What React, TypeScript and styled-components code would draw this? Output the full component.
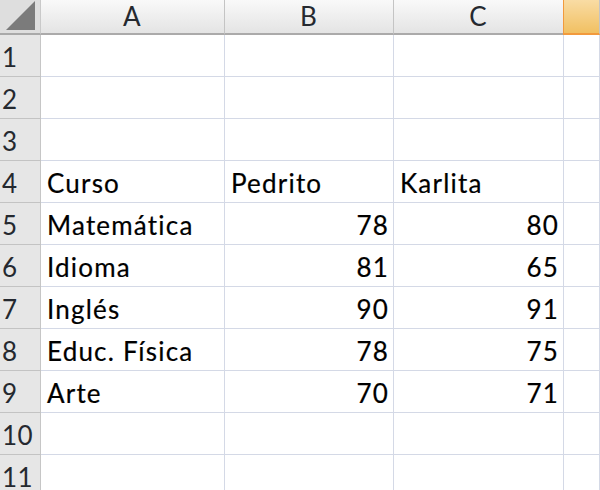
import * as React from 'react';
import styled, { createGlobalStyle } from 'styled-components';

const GlobalStyle = createGlobalStyle`
    html, body {
        margin: 0;
        padding: 0;
        background: #ffffff;
        overflow: hidden;
    }
`;

const columns = ['A', 'B', 'C', ''];

const rows: Array<[string, string, string]> = [
    ['', '', ''],
    ['', '', ''],
    ['', '', ''],
    ['Curso', 'Pedrito', 'Karlita'],
    ['Matemática', '78', '80'],
    ['Idioma', '81', '65'],
    ['Inglés', '90', '91'],
    ['Educ. Física', '78', '75'],
    ['Arte', '70', '71'],
    ['', '', ''],
    ['', '', ''],
];

const isNumber = (value: string) => value !== '' && !isNaN(Number(value));

export default function App() {
    return (
        <>
            <GlobalStyle />
            <Sheet>
                <Corner>
                    <svg width="40" height="33" viewBox="0 0 40 33">
                        <polygon points="6,30 35,30 35,1" fill="#7b7b7b" />
                    </svg>
                </Corner>
                {columns.map((col, i) => (
                    <ColHeader key={col + i} $active={col === ''}>{col}</ColHeader>
                ))}
                {rows.map((row, r) => (
                    <React.Fragment key={r}>
                        <RowHeader>{r + 1}</RowHeader>
                        {row.map((value, c) => (
                            <Cell key={c} $numeric={isNumber(value)}>{value}</Cell>
                        ))}
                        <Cell $numeric={false} />
                    </React.Fragment>
                ))}
            </Sheet>
        </>
    );
}

const Sheet = styled.div`
    display: grid;
    grid-template-columns: 41px 184px 169px 170px 1fr;
    grid-template-rows: 35px repeat(11, 42px);
    width: 600px;
    height: 490px;
    overflow: hidden;
    font-family: Lato, "Open Sans", sans-serif;
    font-size: 26px;
    letter-spacing: 1.2px;
    color: #000;
    -webkit-text-stroke: 0.2px #000;
`;

const Corner = styled.div`
    box-sizing: border-box;
    background: #dedede;
    border-right: 1px solid #c9c9c9;
    border-bottom: 2px solid #a9a9a9;
    svg {
        display: block;
    }
`;

const ColHeader = styled.div<{ $active: boolean }>`
    box-sizing: border-box;
    display: flex;
    align-items: center;
    justify-content: center;
    padding-bottom: 1px;
    background: ${p => p.$active
        ? 'linear-gradient(#f9dca4, #f1c062)'
        : 'linear-gradient(#f9f9f9, #e4e4e4)'};
    border-right: 1px solid #c4c4c4;
    border-bottom: 2px solid ${p => (p.$active ? '#f29a3d' : '#abaaaa')};
    border-left: ${p => (p.$active ? '1px solid #f29a3d' : 'none')};
    margin-left: ${p => (p.$active ? '-1px' : '0')};
    color: #25292f;
    -webkit-text-stroke: 0;
`;

const RowHeader = styled.div`
    box-sizing: border-box;
    display: flex;
    align-items: flex-end;
    padding: 0 0 3px 2px;
    width: 41px;
    background: #e6e6e6;
    border-right: 1px solid #c6c6c6;
    border-bottom: 1px solid #c3c3c3;
    color: #25292f;
    letter-spacing: 0.5px;
    -webkit-text-stroke: 0;
`;

const Cell = styled.div<{ $numeric: boolean }>`
    box-sizing: border-box;
    display: flex;
    align-items: flex-end;
    justify-content: ${p => (p.$numeric ? 'flex-end' : 'flex-start')};
    padding: 0 ${p => (p.$numeric ? '4px' : '5px')} 3px 6px;
    white-space: nowrap;
    overflow: hidden;
    border-right: 1px solid #d4d9e6;
    border-bottom: 1px solid #d4d9e6;
`;
